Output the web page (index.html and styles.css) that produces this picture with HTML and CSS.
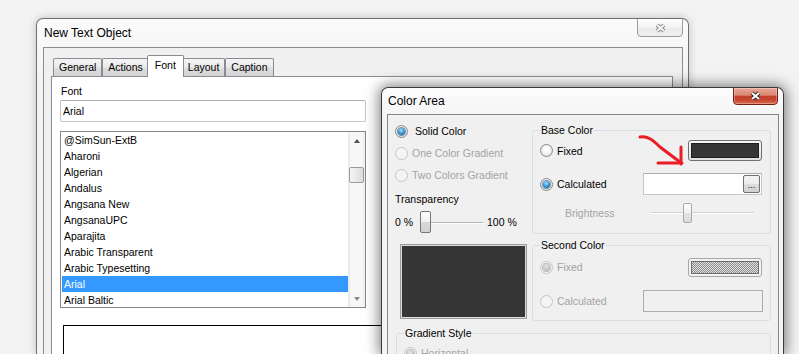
FILE: index.html
```html
<!DOCTYPE html>
<html lang="en">
<head>
    <meta charset="UTF-8">
    <meta name="viewport" content="width=device-width, initial-scale=1.0">
    <title>Color Area</title>
    <link rel="stylesheet" href="styles.css">
</head>
<body>

<div class="window text-object">
    <div class="titlebar">
        <span class="title">New Text Object</span>
        <span class="close-btn inactive">
            <svg width="13" height="10" viewBox="0 0 13 10"><path d="M3 2l7 6M10 2l-7 6" stroke="#8c8c8c" stroke-width="4"/><path d="M3 2l7 6M10 2l-7 6" stroke="#f6f6f6" stroke-width="2"/></svg>
        </span>
    </div>
    <div class="client">
        <div class="tabs">
            <div class="tab">General</div>
            <div class="tab">Actions</div>
            <div class="tab active">Font</div>
            <div class="tab">Layout</div>
            <div class="tab">Caption</div>
        </div>
        <div class="tab-panel">
            <div class="font-fields">
                <div class="field font-field">
                    <div class="field-label">Font</div>
                    <div class="textbox">Arial</div>
                    <div class="listbox">
                        <ul class="font-list">
                            <li>@SimSun-ExtB</li>
                            <li>Aharoni</li>
                            <li>Algerian</li>
                            <li>Andalus</li>
                            <li>Angsana New</li>
                            <li>AngsanaUPC</li>
                            <li>Aparajita</li>
                            <li>Arabic Transparent</li>
                            <li>Arabic Typesetting</li>
                            <li class="selected">Arial</li>
                            <li>Arial Baltic</li>
                        </ul>
                        <div class="scrollbar">
                            <div class="scroll-arrow up"></div>
                            <div class="scroll-track"><div class="scroll-thumb"></div></div>
                            <div class="scroll-arrow down"></div>
                        </div>
                    </div>
                </div>
            </div>
            <div class="preview-box"></div>
        </div>
    </div>
</div>

<div class="window color-area">
    <div class="titlebar">
        <span class="title">Color Area</span>
        <span class="close-btn">
            <svg width="13" height="10" viewBox="0 0 13 10"><path d="M3 2l7 6M10 2l-7 6" stroke="#3d2a27" stroke-width="4"/><path d="M3 2l7 6M10 2l-7 6" stroke="#fff" stroke-width="2"/></svg>
        </span>
    </div>
    <div class="client">
        <div class="fill-modes">
            <div class="option solid"><span class="radio checked"></span>Solid Color</div>
            <div class="option disabled"><span class="radio"></span>One Color Gradient</div>
            <div class="option disabled"><span class="radio"></span>Two Colors Gradient</div>
            <div class="transparency-label">Transparency</div>
            <div class="slider-row">
                <span class="slider-min">0 %</span>
                <div class="slider"><span class="thumb"></span></div>
                <span>100 %</span>
            </div>
        </div>

        <fieldset class="group base-color">
            <legend>Base Color</legend>
            <div class="group-row first">
                <div class="option"><span class="radio"></span>Fixed</div>
                <span class="swatch"><span class="swatch-fill"></span></span>
            </div>
            <div class="group-row second">
                <div class="option"><span class="radio checked"></span>Calculated</div>
                <span class="input-box"><span class="browse-btn">...</span></span>
            </div>
            <div class="group-row third">
                <span class="brightness-label">Brightness</span>
                <div class="slider brightness"><span class="thumb"></span></div>
            </div>
        </fieldset>

        <div class="color-preview"></div>

        <fieldset class="group second-color">
            <legend>Second Color</legend>
            <div class="group-row first">
                <div class="option disabled"><span class="radio checked"></span>Fixed</div>
                <span class="swatch hatched"><span class="swatch-fill"></span></span>
            </div>
            <div class="group-row second">
                <div class="option disabled"><span class="radio"></span>Calculated</div>
                <span class="input-box disabled"></span>
            </div>
        </fieldset>

        <fieldset class="group gradient-style">
            <legend>Gradient Style</legend>
            <div class="group-row">
                <div class="option disabled"><span class="radio checked"></span>Horizontal</div>
            </div>
        </fieldset>
    </div>
</div>

<svg class="annotation" width="799" height="354" viewBox="0 0 799 354">
    <path d="M640 137 C 648 136, 653 140, 660 147 L 680 162" fill="none" stroke="#ea1c24" stroke-width="3" stroke-linecap="round"/>
    <path d="M681 147 L681 164 M658 163 L682 163" fill="none" stroke="#ea1c24" stroke-width="3" stroke-linecap="round"/>
</svg>

</body>
</html>
```

FILE: styles.css
```css
* {
    box-sizing: border-box;
}

body {
    margin: 0;
    width: 799px;
    height: 354px;
    overflow: hidden;
    position: relative;
    background-color: #f3f3f3;
    font-family: "Liberation Sans", Arial, sans-serif;
    font-size: 10.5px;
    color: #000;
}

/* window frames */
.window {
    position: absolute;
    display: flex;
    flex-direction: column;
    overflow: hidden;
    border: 1px solid #6f6f6f;
    border-bottom: none;
    border-radius: 7px 7px 0 0;
    background: linear-gradient(#fbfbfb, #f3f3f3 60px);
}

.text-object {
    left: 36px;
    top: 18px;
    width: 653px;
    height: 336px;
    padding: 0 5px 0 6px;
    box-shadow: 0 0 9px rgba(0, 0, 0, 0.22);
}

.color-area {
    left: 381px;
    top: 87px;
    width: 403px;
    height: 267px;
    padding: 0 4px 0 5px;
    border-color: #3a3a3a;
    background: linear-gradient(#fcfcfc, #f4f4f4 30px);
    box-shadow: 0 0 14px 2px rgba(0, 0, 0, 0.5);
}

.titlebar {
    display: flex;
    justify-content: space-between;
    align-items: center;
    flex: none;
    height: 28px;
    padding-left: 1px;
}

.color-area .titlebar {
    height: 26px;
}

.title {
    font-size: 12px;
}

.close-btn {
    align-self: flex-start;
    display: flex;
    justify-content: center;
    align-items: center;
    width: 46px;
    height: 19px;
    margin-top: -1px;
    border: 1px solid #741f14;
    border-radius: 0 0 4px 4px;
    background: linear-gradient(#e9a797, #db8673 45%, #c2402a 52%, #c6462f 75%, #dc6c50);
    box-shadow: inset 0 0 0 1px rgba(255, 255, 255, 0.3);
}

.color-area .close-btn {
    width: 45px;
    height: 18px;
    margin-right: 1px;
}

.close-btn.inactive {
    border-color: #9c9c9c;
    background: linear-gradient(#fdfdfd, #f3f3f3 50%, #e9e9e9 52%, #f0f0f0);
    box-shadow: none;
}

.client {
    flex: 1;
    min-height: 0;
    border: 1px solid #8d8d8d;
    border-bottom: none;
    background-color: #f0f0f0;
}

/* New Text Object */
.text-object .client {
    display: flex;
    flex-direction: column;
    padding: 7px 9px 0 7px;
}

.tabs {
    display: flex;
    align-items: flex-end;
    flex: none;
    height: 21px;
    padding-left: 2px;
}

.tab {
    height: 18px;
    line-height: 17px;
    padding: 0 5px;
    border: 1px solid #898c95;
    border-bottom: none;
    border-radius: 2px 2px 0 0;
    background: linear-gradient(#f4f4f4, #ebebeb 45%, #dedede 55%, #d3d3d3);
}

.tab.active {
    position: relative;
    z-index: 1;
    height: 22px;
    line-height: 18px;
    margin: 0 -2px -1px;
    padding: 0 7px;
    background: #fff;
}

.tab-panel {
    flex: 1;
    min-height: 0;
    overflow: hidden;
    border: 1px solid #898c95;
    border-bottom: none;
    background-color: #fff;
    padding: 8px 0 0 8px;
}

.font-fields {
    display: flex;
}

.field-label {
    line-height: 13px;
    padding-left: 1px;
    margin-bottom: 2px;
}

.font-field {
    width: 306px;
}

.textbox {
    height: 22px;
    line-height: 20px;
    padding: 0 2px;
    border: 1px solid #c4c6ca;
    border-top-color: #abadb3;
    border-radius: 2px;
    background-color: #fff;
}

.listbox {
    display: flex;
    height: 177px;
    margin-top: 9px;
    border: 1px solid #828790;
    overflow: hidden;
}

.font-list {
    flex: 1;
    list-style: none;
    margin: 0;
    padding: 0 0 0 1px;
}

.font-list li {
    height: 16px;
    line-height: 16px;
    padding-left: 2px;
    white-space: nowrap;
}

.font-list li.selected {
    background-color: #3399ff;
    color: #fff;
}

.scrollbar {
    display: flex;
    flex-direction: column;
    width: 17px;
    background: linear-gradient(to right, #e6e6e6, #f7f7f7 3px, #f7f7f7 14px, #ececec);
}

.scroll-arrow {
    display: flex;
    justify-content: center;
    align-items: center;
    height: 17px;
}

.scroll-arrow::after {
    content: "";
    border-left: 3.5px solid transparent;
    border-right: 3.5px solid transparent;
}

.scroll-arrow.up::after {
    border-bottom: 4px solid #4f4f4f;
}

.scroll-arrow.down::after {
    border-top: 4px solid #8a8a8a;
}

.scroll-track {
    flex: 1;
    padding-top: 18px;
}

.scroll-thumb {
    width: 15px;
    height: 16px;
    margin-left: 1px;
    border: 1px solid #9b9b9b;
    border-radius: 2px;
    background: linear-gradient(to right, #f4f4f4, #dcdcdc);
}

.preview-box {
    width: 620px;
    height: 60px;
    margin: 17px 0 0 3px;
    border: 1px solid #000;
}

/* Color Area */
.color-area .client {
    display: grid;
    grid-template-columns: 144px 239px;
    align-content: start;
    overflow: hidden;
    border-color: #868686;
}

.fill-modes {
    padding: 5px 0 0 7px;
}

.option {
    display: flex;
    align-items: center;
    gap: 4px;
    height: 22px;
    white-space: nowrap;
}

.option.solid {
    gap: 7px;
}

.option.disabled {
    color: #a3a3a3;
}

.radio {
    display: flex;
    justify-content: center;
    align-items: center;
    flex: none;
    width: 13px;
    height: 13px;
    border: 1px solid #8a8a8a;
    border-radius: 50%;
    background: radial-gradient(circle at 50% 40%, #fff 20%, #e2e2e2 75%, #d0d0d0);
}

.radio.checked::after {
    content: "";
    width: 7px;
    height: 7px;
    border-radius: 50%;
    background: radial-gradient(circle at 45% 35%, #a6e6ff, #2b8bd1 55%, #17507f);
    box-shadow: 0 0 0 1px rgba(25, 65, 105, 0.55);
}

.disabled .radio {
    border-color: #c6c6c6;
    background: #f4f4f4;
}

.disabled .radio.checked::after {
    background: radial-gradient(circle at 45% 35%, #e8e8e8, #a9a9a9);
    box-shadow: 0 0 0 1px #bababa;
}

.transparency-label {
    height: 22px;
    line-height: 22px;
    margin-top: 2px;
}

.slider-row {
    display: flex;
    align-items: center;
    height: 24px;
}

.slider-min {
    width: 25px;
}

.slider {
    display: flex;
    align-items: center;
    width: 63px;
    height: 24px;
    margin-right: 4px;
    background: linear-gradient(transparent 12px, #b3b3b3 12px, #b3b3b3 13px, #fff 13px, #fff 14px, transparent 14px);
}

.thumb {
    display: block;
    width: 11px;
    height: 22px;
    border: 1px solid #777;
    border-radius: 2px;
    background: linear-gradient(#fdfdfd, #f1f1f1 50%, #dadada 52%, #d2d2d2);
}

.group {
    margin: 0;
    min-width: 0;
    padding: 2px 8px 8px 7px;
    border: 1px solid #d5dfe5;
    border-radius: 3px;
}

.group legend {
    padding: 0 1px;
    line-height: 13px;
}

.group-row {
    display: flex;
    align-items: center;
    height: 22px;
}

.base-color {
    margin-top: 9px;
    padding-bottom: 9px;
}

.base-color .first {
    height: 23px;
}

.base-color .second {
    margin-top: 11px;
}

.base-color .third {
    margin-top: 7px;
}

.swatch {
    display: block;
    width: 74px;
    height: 21px;
    margin-left: auto;
    padding: 2px;
    border: 1px solid #707070;
    border-radius: 3px;
    background: linear-gradient(#f7f7f7, #e0e0e0);
}

.swatch-fill {
    display: block;
    height: 100%;
    border: 1px solid #1e1e1e;
    background-color: #353535;
}

.swatch.hatched {
    height: 19px;
    border-color: #a8a8a8;
    background: #f3f3f3;
}

.swatch.hatched .swatch-fill {
    border-color: #6e6e6e;
    background: conic-gradient(#8a8a8a 25%, #e4e4e4 0 50%, #8a8a8a 0 75%, #e4e4e4 0);
    background-size: 2px 2px;
}

.input-box {
    display: flex;
    justify-content: flex-end;
    align-items: center;
    width: 119px;
    height: 22px;
    margin-left: auto;
    padding: 0 1px;
    border: 1px solid #c6c6c6;
    border-top-color: #adadad;
    background-color: #fff;
}

.input-box.disabled {
    width: 120px;
    margin-right: -1px;
    border-color: #adadad;
    background-color: #f0f0f0;
}

.browse-btn {
    display: flex;
    justify-content: center;
    align-items: flex-end;
    width: 17px;
    height: 18px;
    padding-bottom: 3px;
    border: 1px solid #707070;
    border-radius: 2px;
    background: linear-gradient(#f4f4f4, #ebebeb 50%, #dddddd 52%, #d0d0d0);
    font-size: 9px;
    line-height: 8px;
}

.brightness-label {
    margin-left: 25px;
    color: #a3a3a3;
}

.slider.brightness {
    width: 103px;
    height: 22px;
    margin: 0 8px 0 auto;
    background: linear-gradient(transparent 10px, #cfcfcf 10px, #cfcfcf 11px, #fff 11px, #fff 12px, transparent 12px);
}

.slider.brightness .thumb {
    width: 9px;
    height: 20px;
    margin-left: 32px;
    border-color: #a9a9a9;
    background: linear-gradient(#fdfdfd, #f2f2f2 50%, #e2e2e2 52%, #dcdcdc);
}

.color-preview {
    width: 127px;
    height: 75px;
    margin: 10px 0 0 12px;
    padding: 1px;
    border: 1px solid #9c9c9c;
    background-color: #363636;
    box-shadow: inset 0 0 0 1px #dcdcdc;
}

.second-color {
    margin-top: 5px;
    padding-bottom: 8px;
}

.second-color .first {
    margin-top: 2px;
}

.second-color .second {
    margin-top: 12px;
}

.gradient-style {
    grid-column: 1 / span 2;
    margin: 6px 0 0 8px;
}

.annotation {
    position: absolute;
    left: 0;
    top: 0;
    pointer-events: none;
}
```
